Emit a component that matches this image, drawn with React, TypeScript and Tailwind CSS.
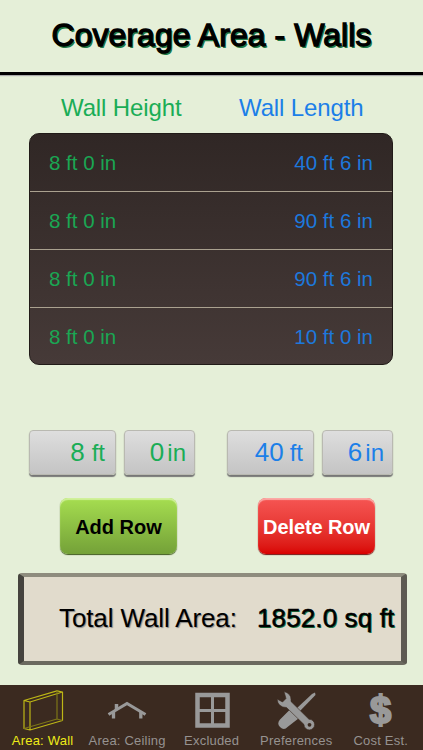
import React from 'react';

type Row = { height: string; length: string };

const rows: Row[] = [
  { height: '8 ft 0 in', length: '40 ft 6 in' },
  { height: '8 ft 0 in', length: '90 ft 6 in' },
  { height: '8 ft 0 in', length: '90 ft 6 in' },
  { height: '8 ft 0 in', length: '10 ft 0 in' },
];

const WallIcon = () => (
  <svg width="42" height="42" viewBox="0 0 42 42" fill="none" stroke="#bdb616" strokeWidth="1.200" strokeLinejoin="round">
    <path d="M2 10.500 L35 .8 L40.500 2 L8 12 Z M2 10.500 V38.500 L8 40 V12 M8 40 L40.500 30.500 V2" />
    <path d="M35 .8 V29 L2 38.500 M35 29 L40.500 30.500" stroke="#7d7618" />
  </svg>
);

const RoofIcon = () => (
  <svg width="42" height="42" viewBox="0 0 42 42" fill="none" stroke="#999">
    <path d="M2.500 24.500 L21 13.500 L39.500 24.500" strokeWidth="3" />
    <path d="M7.500 22 V28.500 M34.800 22 V28.500" strokeWidth="3.300" />
    <path d="M10.500 20 V14" strokeWidth="3.500" />
  </svg>
);

const WindowIcon = () => (
  <svg width="42" height="42" viewBox="0 0 42 42" fill="none" stroke="#999">
    <rect x="6.500" y="5" width="30" height="30.500" strokeWidth="4.500" />
    <path d="M21.500 4 V36 M6 20.500 H37" strokeWidth="3" />
  </svg>
);

const ToolsIcon = () => (
  <svg width="42" height="42" viewBox="0 0 42 42" fill="none">
    {/* screwdriver */}
    <path d="M40 2.500 L40.500 5 L24 22 L21 19 L37 4 Z" fill="#999" />
    <path d="M17 17.500 L26 26.500 L12.500 37 Q9 41 5 37 Q1.500 33.500 5 29.500 Z" fill="#999" />
    {/* wrench */}
    <path
      d="M9 1.500 Q16 3.500 16 9.500 L16 11.500 L34 29.300 A5.300 5.300 0 1 1 29 34.500 L11.500 17.500 Q3 17.500 2 9 L7.500 12 L11 8.500 Z"
      fill="#999"
      stroke="#3b2a20"
      strokeWidth="0.600"
    />
    <circle cx="34.500" cy="34.800" r="1.900" fill="#3b2a20" />
  </svg>
);

const DollarIcon = () => (
  <span className="block h-[42px] font-['Liberation_Sans'] text-[38px] leading-[40px] font-bold text-[#999] [-webkit-text-stroke:2.200px_#999]">$</span>
);

const Field: React.FC<{ value: string; unit: string; className: string }> = ({ value, unit, className }) => (
  <div className={`flex h-[45px] items-baseline justify-end rounded-[4px] border border-[#b9b9b1] bg-linear-to-b from-[#dedede] to-[#c4c4c4] pt-[3px] shadow-[0_2px_1px_#777] ${className}`}>
    <span className="text-[26px] leading-[36px]">{value}</span>
    <span className="text-[24px] leading-[36px]">{unit}</span>
  </div>
);

const tabs = [
  { label: 'Area: Wall', icon: <WallIcon />, active: true },
  { label: 'Area: Ceiling', icon: <RoofIcon />, active: false },
  { label: 'Excluded', icon: <WindowIcon />, active: false },
  { label: 'Preferences', icon: <ToolsIcon />, active: false },
  { label: 'Cost Est.', icon: <DollarIcon />, active: false },
];

export default function App() {
  return (
    <div className="flex h-[750px] w-[423px] flex-col overflow-hidden bg-[#e5efd8] font-['Liberation_Sans',Arial,sans-serif] whitespace-nowrap">
      <header className="h-[75px] border-b-[3px] border-black pt-[16px] text-center shadow-[0_1px_1px_#aaa]">
        <h1 className="text-[32px] leading-[38px] tracking-[0.050px] text-black [-webkit-text-stroke:1.300px_#000] [text-shadow:1px_1px_0_#1f7a45,1.500px_1.500px_0_#1f7a45]">Coverage Area - Walls</h1>
      </header>

      <div className="flex h-[58px] pt-[19px] text-[24px] leading-[28px] tracking-[-0.120px]">
        <span className="ml-[61px] w-[178px] text-[#1aad56]">Wall Height</span>
        <span className="text-[#1c7fe8]">Wall Length</span>
      </div>

      {/* Wall list */}
      <div className="mx-[29px] h-[232px] w-[364px] overflow-hidden rounded-[10px] border border-[#211b18] bg-linear-to-b from-[#302725] to-[#463a38]">
        {rows.map((row, i) => (
          <div key={i} className="flex h-[58px] items-center justify-between border-b border-[#aaa18f] px-[19px] pt-[2px] text-[20.500px] last:border-b-0 last:pt-0">
            <span className="text-[#1aa653]">{row.height}</span>
            <span className="text-[#1d78dc]">{row.length}</span>
          </div>
        ))}
      </div>

      <div className="mt-[65px] ml-[29px] flex h-[45px]">
        <Field value="8" unit="ft" className="w-[87px] gap-[7px] pr-[10px] text-[#1aad56]" />
        <Field value="0" unit="in" className="ml-[8px] w-[71px] gap-[3px] pr-[8px] text-[#1aad56]" />
        <Field value="40" unit="ft" className="ml-[32px] w-[87px] gap-[6px] pr-[10px] text-[#1c7fe8]" />
        <Field value="6" unit="in" className="ml-[8px] w-[71px] gap-[3px] pr-[8px] text-[#1c7fe8]" />
      </div>

      <div className="mt-[23px] ml-[60px] flex gap-[81px] text-[20px] font-bold">
        <button className="h-[56px] w-[117px] rounded-[8px] bg-linear-to-b from-[#a6de50] to-[#74a138] pt-[2px] text-black shadow-[inset_0_2px_1px_#d0f09a,0_1px_1px_#3f5a1c]">Add Row</button>
        <button className="h-[56px] w-[117px] rounded-[8px] bg-linear-to-b from-[#f65553] to-[#d90000] pt-[2px] tracking-[-0.100px] text-white shadow-[inset_0_2px_1px_#fba9a5,0_1px_1px_#751010]">Delete Row</button>
      </div>

      <div className="mt-[19px] ml-[18px] flex h-[92px] w-[389px] items-center rounded-[4px] border-x-[6px] border-y-[4px] border-t-[#8e8c7e] border-r-[#5d5a52] border-b-[#6b695f] border-l-[#45433e] bg-[#e1dbcc] pb-px text-[26px] text-black">
        <span className="ml-[35px] w-[198px] tracking-[-0.120px] [text-shadow:1px_1px_1px_#888]">Total Wall Area:</span>
        <span className="tracking-[0.120px] [-webkit-text-stroke:0.500px_#000] [text-shadow:1px_1px_0_#1f7a45]">1852.0 sq ft</span>
      </div>

      <nav className="mt-auto flex h-[65px] bg-[#3b2a20]">
        {tabs.map((tab) => (
          <div key={tab.label} className={`flex w-[84.600px] flex-col items-center pt-[5px] text-[13px] leading-[16px] tracking-[0.200px] first:ml-[0.300px] ${tab.active ? 'text-[#eeea18]' : 'text-[#969290]'}`}>
            {tab.icon}
            <span className="mt-px">{tab.label}</span>
          </div>
        ))}
      </nav>
    </div>
  );
}
